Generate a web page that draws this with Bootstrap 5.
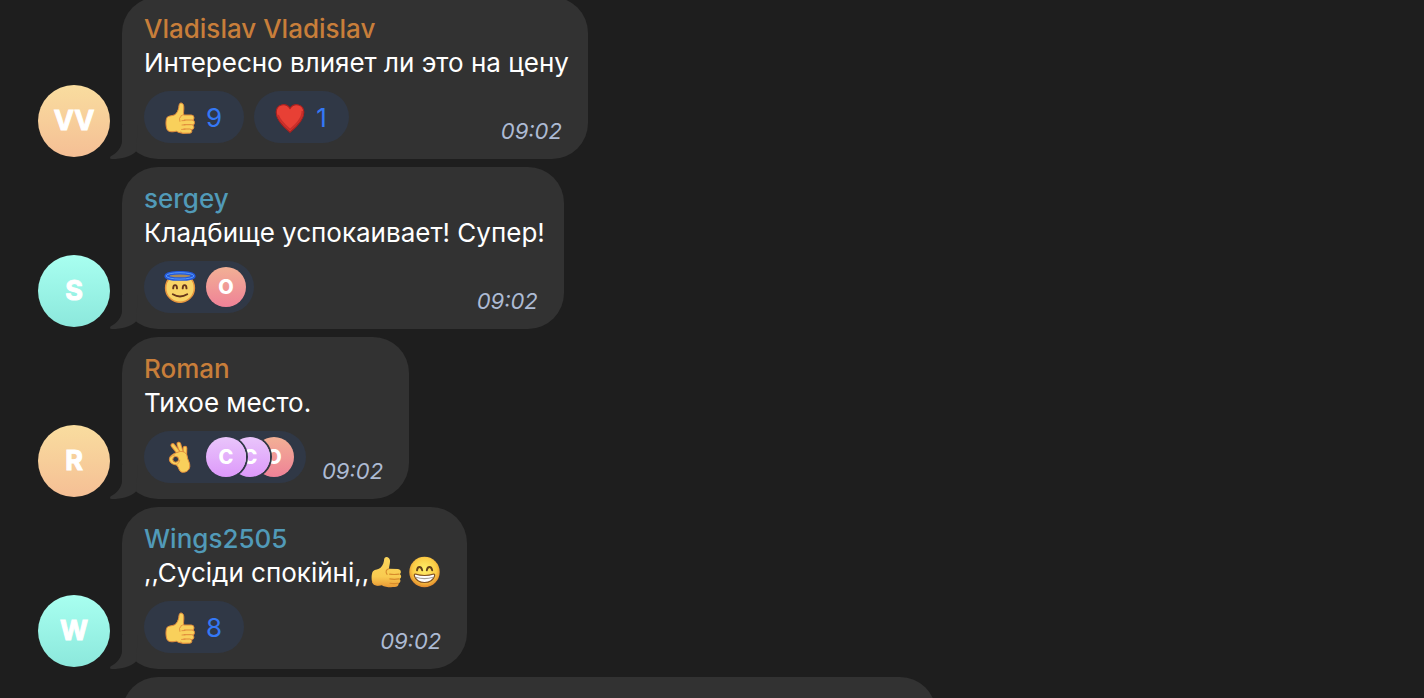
<!DOCTYPE html>
<html lang="uk">
<head>
<meta charset="utf-8">
<meta name="viewport" content="width=device-width, initial-scale=1">
<title>Chat</title>
<link href="https://cdn.jsdelivr.net/npm/bootstrap@5.3.0/dist/css/bootstrap.min.css" rel="stylesheet">
<style>
  body { background: #1e1e1e; color: #fff; font-family: Inter, Roboto, sans-serif; font-size: 26px; line-height: 34px; height: 100vh; overflow: hidden; }
  .thread { margin-top: -3px; padding-left: 38px; gap: 8px; }
  .msg { gap: 12px; }
  .ava { width: 72px; height: 72px; margin-bottom: 2px; font-size: 27px; font-weight: 700; color: #fff; -webkit-text-stroke: 1px #fff; }
  .sand { background: linear-gradient(#f9dd9f, #f5bf95); }
  .mint { background: linear-gradient(#a8fff0, #8ce8dc); }
  .rose { background: linear-gradient(#f2b095, #ef8297); }
  .lilac { background: linear-gradient(#e9c5fb, #dd99fa); }
  .bubble { background: #323232; border-radius: 36px; padding: 15px 19px 16px 22px; min-height: 162px; }
  .wide-bubble { width: 814px; max-width: 80%; }
  .tail { position: absolute; left: -12px; bottom: 0; fill: #323232; }
  .who { font-weight: 500; }
  .orange { color: #c87e3a; }
  .teal { color: #519ab8; }
  .foot { margin-top: 11px; gap: 16px; }
  .chips { gap: 10px; }
  .chip { height: 52px; border: 0; border-radius: 26px; background: #303846; color: #3478f6; padding: 2px 22px 0 20px; gap: 10px; line-height: 34px; }
  .chip-one { padding-right: 8px; }
  .chip-many { padding-right: 12px; }
  .chip-one, .chip-many { padding-top: 0; }
  .mini { width: 40px; height: 40px; color: #fff; font-size: 20px; font-weight: 800; position: relative; box-shadow: 0 0 0 2px #303846; }
  .mini + .mini { margin-left: -16px; }
  .mini:nth-child(1) { z-index: 3; }
  .mini:nth-child(2) { z-index: 2; }
  .stamp { color: #adbbd4; font-size: 22px; line-height: 28px; font-style: italic; margin-right: 7px; margin-bottom: -2px; }
  .emo { width: 32px; height: 32px; flex: none; }
  .inline-emo { gap: 6px; margin: 0 8px 2px 1px; }
</style>
</head>
<body>
<svg width="0" height="0" class="position-absolute" aria-hidden="true">
  <defs>
    <linearGradient id="skin" x1="0" y1="0" x2="0" y2="1"><stop offset="0" stop-color="#fbd65c"/><stop offset=".65" stop-color="#f9cb50"/><stop offset="1" stop-color="#e99a35"/></linearGradient>
    <radialGradient id="face" cx=".5" cy=".42" r=".6"><stop offset="0" stop-color="#fff06a"/><stop offset=".65" stop-color="#fbcc45"/><stop offset="1" stop-color="#e0812a"/></radialGradient>
    <symbol id="tail" viewBox="0 0 28 34"><path d="M12 0V16C12 22 7 28 .5 31.5Q-1 34 2 34C12 34 20 32 26 26.5L28 0Z"/></symbol>
    <symbol id="thumb" viewBox="0 0 32 32">
      <g fill="#f9d05b" stroke="#e08b3c" stroke-width="1" stroke-linejoin="round">
        <path d="M3.2 15.2C5 13.6 8.6 13.9 10.8 12.7C13 11.4 14.2 8.4 14.7 5.6C15 3.1 15.3 1 16.9 1C19.6 1 20 4.2 19.8 7C19.7 9.4 19.3 11.6 19.8 13.5L27 15L25 30.4C20.5 31.6 15.3 31.4 12.3 29.2C9.5 29.9 6.4 30.3 4 28.7C1.5 26.6 1.4 17.6 3.2 15.2Z"/>
        <rect x="16.4" y="13" width="13.6" height="5.7" rx="2.7"/>
        <rect x="17.2" y="18" width="13.3" height="5.2" rx="2.5"/>
        <rect x="17" y="22.7" width="12.9" height="4.9" rx="2.4"/>
        <rect x="16.7" y="27" width="11.2" height="4.2" rx="2.1"/>
      </g>
      <path d="M15.8 13.9L20 13.6L19.4 29.7L15.4 29.4Z" fill="#f9d05b"/>
      <path d="M15.8 19.4Q14.4 16.1 17 14.1M17.9 18.7L21 18.5M18 23L21 22.9M17.6 27.4L21 27.2" fill="none" stroke="#e08b3c" stroke-linecap="round" stroke-width=".9"/>
    </symbol>
    <symbol id="thumb-soft" viewBox="0 0 32 32">
      <path d="M3 15.2C5 13.2 8.5 13.7 10.8 11.5C13.2 9 13.9 6 14.2 3C14.7-.3 19.6.4 20 4.5C20.2 7.7 18.9 10.4 19 12.8L28 13C31.5 13.5 31.5 17.2 29.6 18C31.8 19 31.5 22.2 29.5 22.9C31.2 24.1 30.5 26.9 28.5 27.3C29 29.8 27 31 24.7 31.1C20 31.5 15 31.3 11.8 29.2C8.9 29.8 5 30.3 3.1 28C1 25.5 1.2 17.5 3 15.2Z" fill="url(#skin)"/>
      <path d="M29 18.1Q24 19 19.6 18.1M29 22.9Q24 23.8 19.8 22.9M28 27.3Q24 28 20 27.3M18.7 12.8C16 13.6 15.2 16 17.1 18.3" fill="none" stroke="#d78b2b" stroke-width="1.1" stroke-linecap="round"/>
      <path d="M2.3 25C3 29.4 8 29.4 12 28.3" fill="none" stroke="#eba33a" stroke-width="1"/>
    </symbol>
    <symbol id="heart" viewBox="0 0 32 32">
      <path d="M16 30.2C11.5 26.5 2.2 18.8 2.2 10.3C2.2 2 12 .4 16 6.4C20 .4 29.8 2 29.8 10.3C29.8 18.8 20.5 26.5 16 30.2Z" fill="#e84035" stroke="#a9211f" stroke-width="1.2"/>
      <path d="M28.4 9C28.7 16.5 22 22.5 16 27.8C10.3 22.9 5.6 18 4 13" fill="none" stroke="#c72e2a" stroke-width="1.8"/>
    </symbol>
    <symbol id="angel" viewBox="0 0 32 32">
      <circle cx="16" cy="16.9" r="14.4" fill="#f8d467" stroke="#e6943e" stroke-width="1.5"/>
      <ellipse cx="16" cy="5" rx="11" ry="2.4" fill="#a88a58"/>
      <ellipse cx="16" cy="4.9" rx="13.9" ry="3.2" fill="none" stroke="#2459dc" stroke-width="3.5"/>
      <ellipse cx="16" cy="4.9" rx="13.9" ry="3.2" fill="none" stroke="#569af8" stroke-width="1"/>
      <path d="M9.2 17.4C9.2 13 13 13 13 17.4M18.7 17.4C18.7 13 22.5 13 22.5 17.4M8.8 23.3Q16 27.7 23.2 23.3" fill="none" stroke="#66351a" stroke-width="1.9" stroke-linecap="round"/>
    </symbol>
    <symbol id="ok-hand" viewBox="0 0 32 32">
      <g fill="none" stroke-linecap="round">
        <path d="M21 7L20.8 15" stroke="#e08b3c" stroke-width="4.6"/><path d="M21 7L20.8 15" stroke="#f9d05b" stroke-width="2.6"/>
        <path d="M14.8 3L18.3 14" stroke="#e08b3c" stroke-width="4.6"/><path d="M14.8 3L18.3 14" stroke="#f9d05b" stroke-width="2.6"/>
        <path d="M8.8 4.4L16.5 14" stroke="#e08b3c" stroke-width="4.6"/><path d="M8.8 4.4L16.5 14" stroke="#f9d05b" stroke-width="2.6"/>
      </g>
      <path d="M14 11.2C17 9.5 22 10.5 23.1 14.8C23.4 19.3 26.3 21.5 25.8 25.5C25.3 29.8 21.5 31.8 17.8 31.2C14.2 29.7 15.4 26.5 12.4 23.9C8 23.6 5 21 5.4 17.8C5.9 14 10.4 12.2 14 11.2Z" fill="#f9d05b" stroke="#e08b3c"/>
      <circle cx="11.7" cy="18.3" r="2.9" fill="#303846" stroke="#e08b3c"/>
      <path d="M6 16.2Q9 14.2 11 13.8M15.8 18.8Q15.7 22.1 12.5 23.8" fill="none" stroke="#e08b3c" stroke-width=".8"/>
    </symbol>
    <symbol id="grin" viewBox="0 0 32 32">
      <circle cx="16.5" cy="16" r="15.2" fill="url(#face)"/>
      <path d="M9 14.4C9.4 9.8 13.4 9.8 14.2 14.4M18.8 14.4C19.4 9.8 23.5 9.8 24.2 14.4" fill="none" stroke="#65401a" stroke-width="1.9" stroke-linecap="round"/>
      <path d="M7.2 18Q16.5 21 25.8 18Q27 18 26.6 20C23.8 28.6 9.2 28.6 6.4 20Q6 18 7.2 18Z" fill="#fff" stroke="#805021" stroke-width="1.1"/>
      <path d="M7.8 21.3Q16.5 24 25.2 21.3" fill="none" stroke="#a7a29b" stroke-width="1.1"/>
    </symbol>
  </defs>
</svg>

<main class="thread d-flex flex-column align-items-start">
  <article class="msg d-flex align-items-end">
    <div class="ava sand rounded-circle d-flex align-items-center justify-content-center">VV</div>
    <div class="bubble position-relative">
      <svg class="tail" width="28" height="34" aria-hidden="true"><use href="#tail"/></svg>
      <div class="who orange">Vladislav Vladislav</div>
      <div>Интересно влияет ли это на цену</div>
      <div class="foot d-flex justify-content-between align-items-end">
        <div class="chips d-flex">
          <button type="button" class="chip d-flex align-items-center"><svg class="emo" role="img" aria-label="👍"><use href="#thumb"/></svg>9</button>
          <button type="button" class="chip d-flex align-items-center"><svg class="emo" role="img" aria-label="❤"><use href="#heart"/></svg>1</button>
        </div>
        <time class="stamp">09:02</time>
      </div>
    </div>
  </article>

  <article class="msg d-flex align-items-end">
    <div class="ava mint rounded-circle d-flex align-items-center justify-content-center">S</div>
    <div class="bubble position-relative">
      <svg class="tail" width="28" height="34" aria-hidden="true"><use href="#tail"/></svg>
      <div class="who teal">sergey</div>
      <div>Кладбище успокаивает! Супер!</div>
      <div class="foot d-flex justify-content-between align-items-end">
        <button type="button" class="chip chip-one d-flex align-items-center">
          <svg class="emo" role="img" aria-label="😇"><use href="#angel"/></svg>
          <span class="d-flex"><span class="mini rose rounded-circle d-flex align-items-center justify-content-center">O</span></span>
        </button>
        <time class="stamp">09:02</time>
      </div>
    </div>
  </article>

  <article class="msg d-flex align-items-end">
    <div class="ava sand rounded-circle d-flex align-items-center justify-content-center">R</div>
    <div class="bubble position-relative">
      <svg class="tail" width="28" height="34" aria-hidden="true"><use href="#tail"/></svg>
      <div class="who orange">Roman</div>
      <div>Тихое место.</div>
      <div class="foot d-flex justify-content-between align-items-end">
        <button type="button" class="chip chip-many d-flex align-items-center">
          <svg class="emo" role="img" aria-label="👌"><use href="#ok-hand"/></svg>
          <span class="d-flex">
            <span class="mini lilac rounded-circle d-flex align-items-center justify-content-center">C</span>
            <span class="mini lilac rounded-circle d-flex align-items-center justify-content-center">C</span>
            <span class="mini rose rounded-circle d-flex align-items-center justify-content-center">O</span>
          </span>
        </button>
        <time class="stamp">09:02</time>
      </div>
    </div>
  </article>

  <article class="msg d-flex align-items-end">
    <div class="ava mint rounded-circle d-flex align-items-center justify-content-center">W</div>
    <div class="bubble position-relative">
      <svg class="tail" width="28" height="34" aria-hidden="true"><use href="#tail"/></svg>
      <div class="who teal">Wings2505</div>
      <div class="d-flex align-items-center">,,Сусіди спокійні,,<span class="inline-emo d-flex"><svg class="emo" role="img" aria-label="👍"><use href="#thumb-soft"/></svg><svg class="emo" role="img" aria-label="😁"><use href="#grin"/></svg></span></div>
      <div class="foot d-flex justify-content-between align-items-end">
        <button type="button" class="chip d-flex align-items-center"><svg class="emo" role="img" aria-label="👍"><use href="#thumb"/></svg>8</button>
        <time class="stamp">09:02</time>
      </div>
    </div>
  </article>

  <article class="msg d-flex align-items-end w-100">
    <div class="ava flex-shrink-0"></div>
    <div class="bubble wide-bubble"></div>
  </article>
</main>
<script src="https://cdn.jsdelivr.net/npm/bootstrap@5.3.0/dist/js/bootstrap.bundle.min.js"></script>
</body>
</html>
